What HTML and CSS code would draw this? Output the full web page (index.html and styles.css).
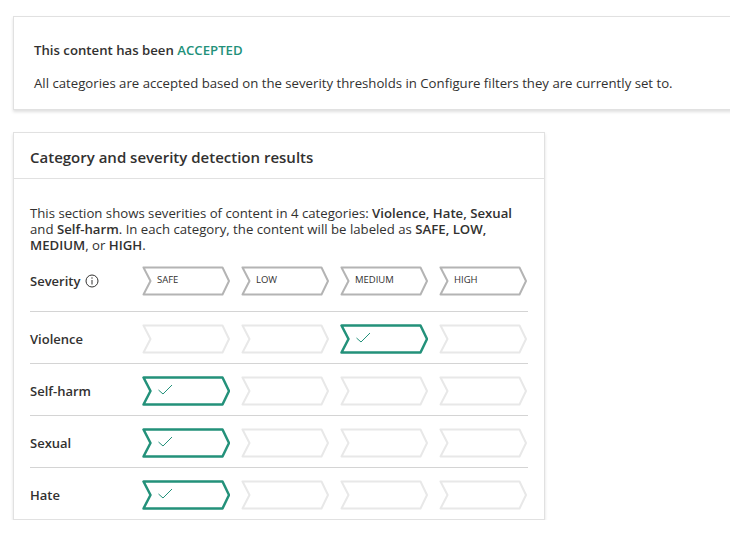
FILE: index.html
```html
<!DOCTYPE html>
<html lang="en">
<head>
  <meta charset="UTF-8">
  <title>Content filter results</title>
  <link rel="stylesheet" href="styles.css">
</head>
<body>

  <div class="status-card">
    <p class="status-title">This content has been <span class="accepted">ACCEPTED</span></p>
    <p class="status-text">All categories are accepted based on the severity thresholds in Configure filters they are currently set to.</p>
  </div>

  <div class="results-card">
    <div class="results-header">Category and severity detection results</div>
    <div class="results-body">
      <p class="intro">This section shows severities of content in 4 categories: <b>Violence, Hate, Sexual</b> and <b>Self-harm</b>. In each category, the content will be labeled as <b>SAFE, LOW, MEDIUM</b>, or <b>HIGH</b>.</p>

      <!-- fila de encabezado -->
      <div class="sev-row sev-head">
        <div class="sev-label">Severity
          <svg class="info" width="14" height="14" viewBox="0 0 14 14"><circle cx="7" cy="7" r="6" fill="none" stroke="#323130" stroke-width="1"/><line x1="7" y1="6" x2="7" y2="10.5" stroke="#323130" stroke-width="1"/><circle cx="7" cy="4" r="0.7" fill="#323130"/></svg>
        </div>
        <div class="steps">
          <span class="step head"><svg class="shape" viewBox="0 0 88 30"><polygon points="1.5,1.5 80.5,1.5 87,15 80.5,28.5 1.5,28.5 8.5,15"/></svg><span class="step-text">SAFE</span></span>
          <span class="step head"><svg class="shape" viewBox="0 0 88 30"><polygon points="1.5,1.5 80.5,1.5 87,15 80.5,28.5 1.5,28.5 8.5,15"/></svg><span class="step-text">LOW</span></span>
          <span class="step head"><svg class="shape" viewBox="0 0 88 30"><polygon points="1.5,1.5 80.5,1.5 87,15 80.5,28.5 1.5,28.5 8.5,15"/></svg><span class="step-text">MEDIUM</span></span>
          <span class="step head"><svg class="shape" viewBox="0 0 88 30"><polygon points="1.5,1.5 80.5,1.5 87,15 80.5,28.5 1.5,28.5 8.5,15"/></svg><span class="step-text">HIGH</span></span>
        </div>
      </div>

      <div class="sev-row">
        <div class="sev-label">Violence</div>
        <div class="steps">
          <span class="step"><svg class="shape" viewBox="0 0 88 30"><polygon points="1.5,1.5 80.5,1.5 87,15 80.5,28.5 1.5,28.5 8.5,15"/></svg></span>
          <span class="step"><svg class="shape" viewBox="0 0 88 30"><polygon points="1.5,1.5 80.5,1.5 87,15 80.5,28.5 1.5,28.5 8.5,15"/></svg></span>
          <span class="step on"><svg class="shape" viewBox="0 0 88 30"><polygon points="1.5,1.5 80.5,1.5 87,15 80.5,28.5 1.5,28.5 8.5,15"/><polyline class="check" points="16.5,14 21,18 30,9"/></svg></span>
          <span class="step"><svg class="shape" viewBox="0 0 88 30"><polygon points="1.5,1.5 80.5,1.5 87,15 80.5,28.5 1.5,28.5 8.5,15"/></svg></span>
        </div>
      </div>

      <div class="sev-row">
        <div class="sev-label">Self-harm</div>
        <div class="steps">
          <span class="step on"><svg class="shape" viewBox="0 0 88 30"><polygon points="1.5,1.5 80.5,1.5 87,15 80.5,28.5 1.5,28.5 8.5,15"/><polyline class="check" points="16.5,14 21,18 30,9"/></svg></span>
          <span class="step"><svg class="shape" viewBox="0 0 88 30"><polygon points="1.5,1.5 80.5,1.5 87,15 80.5,28.5 1.5,28.5 8.5,15"/></svg></span>
          <span class="step"><svg class="shape" viewBox="0 0 88 30"><polygon points="1.5,1.5 80.5,1.5 87,15 80.5,28.5 1.5,28.5 8.5,15"/></svg></span>
          <span class="step"><svg class="shape" viewBox="0 0 88 30"><polygon points="1.5,1.5 80.5,1.5 87,15 80.5,28.5 1.5,28.5 8.5,15"/></svg></span>
        </div>
      </div>

      <div class="sev-row">
        <div class="sev-label">Sexual</div>
        <div class="steps">
          <span class="step on"><svg class="shape" viewBox="0 0 88 30"><polygon points="1.5,1.5 80.5,1.5 87,15 80.5,28.5 1.5,28.5 8.5,15"/><polyline class="check" points="16.5,14 21,18 30,9"/></svg></span>
          <span class="step"><svg class="shape" viewBox="0 0 88 30"><polygon points="1.5,1.5 80.5,1.5 87,15 80.5,28.5 1.5,28.5 8.5,15"/></svg></span>
          <span class="step"><svg class="shape" viewBox="0 0 88 30"><polygon points="1.5,1.5 80.5,1.5 87,15 80.5,28.5 1.5,28.5 8.5,15"/></svg></span>
          <span class="step"><svg class="shape" viewBox="0 0 88 30"><polygon points="1.5,1.5 80.5,1.5 87,15 80.5,28.5 1.5,28.5 8.5,15"/></svg></span>
        </div>
      </div>

      <div class="sev-row">
        <div class="sev-label">Hate</div>
        <div class="steps">
          <span class="step on"><svg class="shape" viewBox="0 0 88 30"><polygon points="1.5,1.5 80.5,1.5 87,15 80.5,28.5 1.5,28.5 8.5,15"/><polyline class="check" points="16.5,14 21,18 30,9"/></svg></span>
          <span class="step"><svg class="shape" viewBox="0 0 88 30"><polygon points="1.5,1.5 80.5,1.5 87,15 80.5,28.5 1.5,28.5 8.5,15"/></svg></span>
          <span class="step"><svg class="shape" viewBox="0 0 88 30"><polygon points="1.5,1.5 80.5,1.5 87,15 80.5,28.5 1.5,28.5 8.5,15"/></svg></span>
          <span class="step"><svg class="shape" viewBox="0 0 88 30"><polygon points="1.5,1.5 80.5,1.5 87,15 80.5,28.5 1.5,28.5 8.5,15"/></svg></span>
        </div>
      </div>
    </div>
  </div>

</body>
</html>
```

FILE: styles.css
```css
html {
  overflow: hidden;
}
body {
  margin: 0;
  padding: 16px 0 0 13px;
  font-family: "Segoe UI", "Open Sans", sans-serif;
  color: #323130;
  background-color: #fff;
}
p {
  margin: 0;
}
.status-card {
  width: 740px;
  height: 94px;
  box-sizing: border-box;
  border: 1px solid #e1e1e1;
  border-right: none;
  box-shadow: 0 2px 3px rgba(0, 0, 0, 0.13);
  padding: 24px 20px 0 20px;
  font-size: 13.2px;
}
.status-title {
  font-weight: 600;
  line-height: 18px;
}
.accepted {
  color: #23917a;
}
.status-text {
  margin-top: 15px;
  line-height: 18px;
}
.results-card {
  margin-top: 22px;
  width: 532px;
  box-sizing: border-box;
  border: 1px solid #e1e1e1;
  box-shadow: 0 2px 3px rgba(0, 0, 0, 0.13);
}
.results-header {
  height: 46px;
  box-sizing: border-box;
  padding: 13px 16px 0 16px;
  font-size: 15px;
  font-weight: 600;
  line-height: 22px;
  border-bottom: 1px solid #e1e1e1;
}
.results-body {
  padding: 26px 16px 0 16px;
}
.intro {
  font-size: 13.2px;
  line-height: 16px;
}
.intro b {
  font-weight: 600;
}
.sev-row {
  display: flex;
  align-items: flex-start;
  height: 52px;
  box-sizing: border-box;
  border-top: 1px solid #d4d4d4;
  padding-top: 12px;
}
.sev-row.sev-head {
  border-top: none;
  height: 58px;
  padding-top: 13px;
}
.sev-label {
  width: 112px;
  height: 30px;
  flex-shrink: 0;
  font-size: 13px;
  font-weight: 600;
  display: flex;
  align-items: center;
  gap: 5px;
}
.info {
  display: block;
}
.steps {
  display: flex;
  gap: 11px;
}
.step {
  position: relative;
  width: 88px;
  height: 30px;
  display: flex;
  align-items: center;
}
.shape {
  position: absolute;
  left: 0;
  top: 0;
  width: 88px;
  height: 30px;
  fill: #fff;
  stroke: #e8e8e8;
  stroke-width: 2;
  stroke-linejoin: round;
}
.step.head .shape {
  stroke: #b4b4b4;
}
.step.on .shape {
  stroke: #23917a;
  stroke-width: 2.5;
}
.check {
  fill: none;
  stroke: #23917a;
  stroke-width: 1;
}
.step-text {
  position: relative;
  padding: 0 0 3px 15px;
  font-size: 9.5px;
  color: #323130;
}
```
